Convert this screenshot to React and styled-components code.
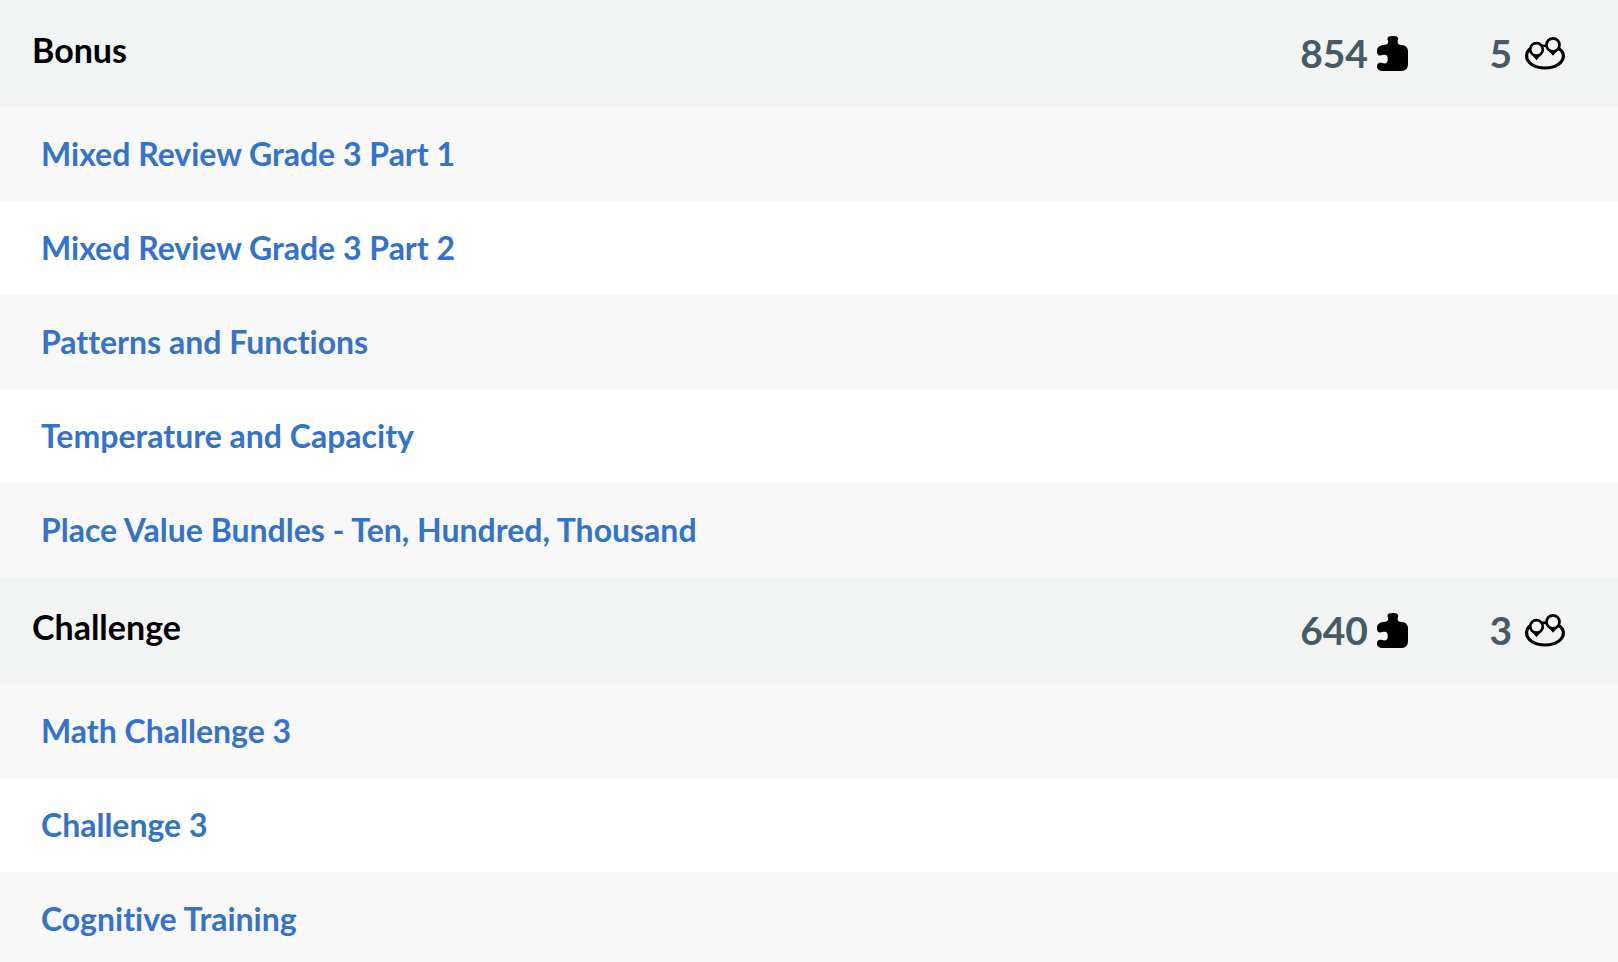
import React from 'react';
import styled, { createGlobalStyle } from 'styled-components';

const GlobalStyle = createGlobalStyle`
  body {
    margin: 0;
    background-color: #fff;
    font-family: Lato, 'Open Sans', sans-serif;
    font-weight: bold;
    font-variant-ligatures: none;
  }
`;

const SectionHeader = styled.header`
  background-color: #f1f4f3;
  display: flex;
  justify-content: space-between;
  align-items: flex-start;
  padding: 29px 53px 30px 32px;
`;

const SectionTitle = styled.h2`
  color: #000;
  font-size: 34px;
  line-height: 42px;
  margin: 0;
`;

const Stats = styled.div`
  display: flex;
  align-items: center;
`;

const Stat = styled.div`
  display: flex;
  align-items: center;
  justify-content: flex-end;
  gap: ${props => props.$gap};
  min-width: 157px;
`;

const StatNumber = styled.span`
  color: #455a64;
  font-size: 39px;
  line-height: 48px;
`;

const TopicList = styled.ul`
  list-style-type: none;
  margin: 0;
  padding: 0;
`;

const TopicRow = styled.li`
  background-color: #fff;
  padding: 24px 41px;
  font-size: 32px;
  line-height: 46px;

  &:nth-child(odd) {
    background-color: #f8f8f8;
  }
`;

const TopicLink = styled.a`
  color: #3572c9;
  text-decoration: none;

  &:hover {
    text-decoration: underline;
  }
`;

const PuzzleIcon = () => (
  <svg width="31" height="35" viewBox="0 0 31 35" role="img" aria-label="puzzles">
    <path d="M10.5 2.5C10.5 .8 12.5 0 15.8 0S21.2 .8 21.2 2.5C21.2 4 20.6 4.5 20.6 6C20.6 8 22 8.8 24.5 9C28.5 9.3 31 11.5 31 15V28C31 32.5 28.5 35 24 35H6C2 35 0 33.3 0 30.5C0 28 1.3 26.8 3 26.8C5 26.8 5.5 27.5 7.5 27.5C9.8 27.5 10.8 25.8 10.8 23S9.8 18.7 7.5 18.7C5.5 18.7 5 19.4 3 19.4C1.2 19.4 0 18 0 15.5C0 11.5 2.3 9.6 6 9.1C9.5 8.7 11.2 8 11.2 6C11.2 4.5 10.5 4 10.5 2.5Z" />
  </svg>
);

const MapIcon = () => (
  <svg width="40" height="33" viewBox="0 0 40 33" role="img" aria-label="places">
    <g fill="none" stroke="#000">
      <path strokeWidth="3.2" d="M5.5 11.5C2.8 13.5 1.6 16 1.6 18.8C1.6 25.8 9.5 31 20 31S38.4 25.8 38.4 18.8C38.4 16 37 13.5 34 11.8" />
      <path strokeWidth="2.6" d="M17 8.8H22" />
      <circle cx="11.5" cy="12.4" r="6.3" strokeWidth="2.7" />
      <circle cx="28" cy="7.9" r="6.5" strokeWidth="2.7" />
    </g>
    <path d="M6 16.5Q11.5 20 17 16.5L11.5 23.3Z" />
    <path d="M22.5 12.3Q28 15.6 33.5 12.3L28 18.8Z" />
  </svg>
);

const sections = [
  {
    title: 'Bonus',
    puzzles: 854,
    places: 5,
    topics: [
      'Mixed Review Grade 3 Part 1',
      'Mixed Review Grade 3 Part 2',
      'Patterns and Functions',
      'Temperature and Capacity',
      'Place Value Bundles - Ten, Hundred, Thousand',
    ],
  },
  {
    title: 'Challenge',
    puzzles: 640,
    places: 3,
    topics: ['Math Challenge 3', 'Challenge 3', 'Cognitive Training'],
  },
];

const App = () => {
  return (
    <main>
      <GlobalStyle />
      {sections.map(section => (
        <section key={section.title}>
          <SectionHeader>
            <SectionTitle>{section.title}</SectionTitle>
            <Stats>
              <Stat $gap="9px">
                <StatNumber>{section.puzzles}</StatNumber>
                <PuzzleIcon />
              </Stat>
              <Stat $gap="13px">
                <StatNumber>{section.places}</StatNumber>
                <MapIcon />
              </Stat>
            </Stats>
          </SectionHeader>
          <TopicList>
            {section.topics.map(topic => (
              <TopicRow key={topic}>
                <TopicLink href="#">{topic}</TopicLink>
              </TopicRow>
            ))}
          </TopicList>
        </section>
      ))}
    </main>
  );
};

export default App;
